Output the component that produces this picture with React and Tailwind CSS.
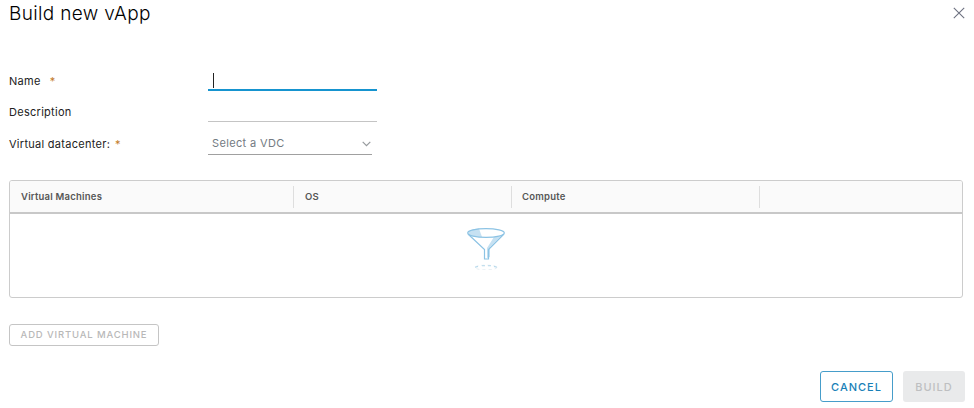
import React from "react";

function Label({ children, required, gap = "ml-[9px]" }) {
  return (
    <label className="flex w-[199px] shrink-0 items-center text-[11px] leading-4 tracking-[0.28px] text-[#222]">
      {children}
      {required && <span className={`${gap} text-[11px] text-[#c27a28]`}>*</span>}
    </label>
  );
}

function FunnelIcon() {
  return (
    <svg width="40" height="44" viewBox="0 0 40 44" fill="none">
      <path d="M2 7C3 4 7 3 13 2.5L16 11C8 11 3 10 2 7Z" fill="#c6e1f2" />
      <path d="M37 8L24 21V31L21 32V22L28 11C33 11 36 10 37 8Z" fill="#c6e1f2" />
      <ellipse cx="20" cy="7" rx="18.3" ry="4.4" stroke="#8cc3e4" strokeWidth="1.2" />
      <path d="M2 8L18.5 23.5V33H22.5V23.5L38 8" stroke="#8cc3e4" strokeWidth="1.2" />
      <ellipse cx="20" cy="41.5" rx="11" ry="2.3" stroke="#e0eaf0" strokeWidth="0.8" strokeDasharray="3 3" />
      <path d="M9 41.2L12 40.4M16 39.7H19M22 39.7H25M28 40.4L31 41.2" stroke="#b7d9ec" strokeWidth="1.1" />
    </svg>
  );
}

export default function App() {
  return (
    <main className="flex h-[408px] w-[974px] flex-col bg-white pl-[9px] font-['Inter','Liberation_Sans',sans-serif]">
      <header className="flex h-[26px] items-center justify-between pr-[9px]">
        <h1 className="pt-px text-[19px] leading-6 font-light tracking-[0.35px] text-black">Build new vApp</h1>
        <button aria-label="Close">
          <svg width="12" height="12" viewBox="0 0 12 12" fill="none" stroke="#6d7180" strokeWidth="1.1">
            <path d="M.8.8 11.2 11.2M11.2.8.8 11.2" />
          </svg>
        </button>
      </header>

      <form className="mt-[45px] flex flex-col">
        <div className="flex h-5 items-center">
          <Label required>Name</Label>
          <div className="flex h-5 w-[169px] items-center border-b-2 border-[#1694cf] pl-[5px]">
            <span className="h-[15px] w-px bg-[#222]" />
          </div>
        </div>
        <div className="mt-[11px] flex h-5 items-center">
          <Label>Description</Label>
          <div className="h-5 w-[169px] border-b border-[#c4c4c4]" />
        </div>
        <div className="mt-3 flex h-5 items-center">
          <Label required gap="ml-[5px]">Virtual datacenter:</Label>
          <div className="flex h-[22px] w-[164px] items-center justify-between border-b border-[#a0a0a0] pr-px pl-1 text-[11px] tracking-[0.35px] text-[#737b82]">
            <span>Select a VDC</span>
            <svg width="9" height="6" viewBox="0 0 9 6" fill="none" stroke="#969a9d" strokeWidth="1.2">
              <path d="M.7.8 4.5 4.6 8.3.8" />
            </svg>
          </div>
        </div>
      </form>

      <section className="mt-[26px] h-[118px] w-[954px] shrink-0 overflow-hidden rounded-[3px] border border-[#cccccc]">
        <div className="grid h-[33px] grid-cols-[284px_218px_248px_1fr] items-center border-b-2 border-[#c8c8c8] bg-[#fafafa] text-[9.5px] font-semibold tracking-[0.22px] text-[#565656]">
          <div className="flex h-[22px] items-center border-r border-[#dedede] pt-0.5 pl-[11px]">Virtual Machines</div>
          <div className="flex h-[22px] items-center border-r border-[#dedede] pt-0.5 pl-[11px]">OS</div>
          <div className="flex h-[22px] items-center border-r border-[#dedede] pt-0.5 pl-[10px]">Compute</div>
        </div>
        <div className="flex justify-center pt-[12px]">
          <FunnelIcon />
        </div>
      </section>

      <button className="mt-[26px] flex h-[22px] w-[150px] shrink-0 items-center justify-center rounded-[3px] border border-[#c5c5c5] text-[9.5px] font-medium tracking-[0.85px] whitespace-nowrap text-[#b8b8b8]">
        ADD VIRTUAL MACHINE
      </button>

      <footer className="mt-[25px] flex justify-end gap-[10px] pr-[9px] text-[11px] font-medium tracking-[1px]">
        <button className="flex h-[31px] w-[73px] items-center justify-center rounded-[3px] border border-[#469dca] pt-px text-[#187fb7]">CANCEL</button>
        <button className="flex h-[31px] w-[62px] items-center justify-center rounded-[3px] bg-[#e9eaeb] pt-px text-[#bebfc1]">BUILD</button>
      </footer>
    </main>
  );
}
